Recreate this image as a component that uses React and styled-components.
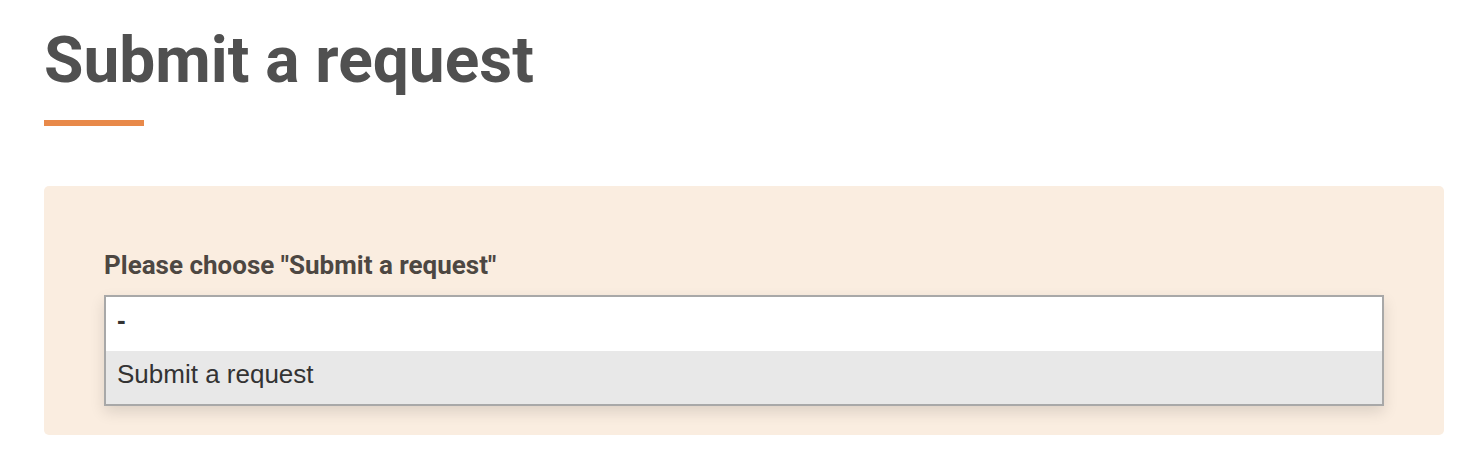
import React from 'react';
import styled, { createGlobalStyle } from 'styled-components';

const GlobalStyle = createGlobalStyle`
  html, body {
    margin: 0;
    padding: 0;
    background: #ffffff;
  }
  body {
    font-family: Roboto, "Liberation Sans", sans-serif;
  }
`;

const Page = styled.div`
  padding: 23px 40px 0 44px;
  width: 1400px;
`;

const Title = styled.h1`
  margin: 0;
  font-family: Roboto, sans-serif;
  font-weight: 700;
  font-size: 64px;
  line-height: 76px;
  color: #505050;
`;

const Accent = styled.div`
  width: 100px;
  height: 6px;
  margin-top: 21px;
  background: #e8894a;
`;

const Panel = styled.div`
  margin-top: 60px;
  height: 249px;
  box-sizing: border-box;
  padding: 64px 60px 0 60px;
  background: #faede0;
  border-radius: 5px;
`;

const Label = styled.label`
  display: block;
  font-family: Roboto, sans-serif;
  font-weight: 700;
  font-size: 26px;
  line-height: 30px;
  color: #4d4742;
`;

const ListBox = styled.div`
  margin-top: 15px;
  border: 2px solid #a8a8a8;
  background: #ffffff;
  box-shadow: 0 6px 14px rgba(0, 0, 0, 0.12);
`;

const Option = styled.div`
  height: ${p => p.h}px;
  box-sizing: border-box;
  padding: 8px 0 0 11px;
  font-family: "Liberation Sans", Arial, sans-serif;
  font-size: 26px;
  line-height: 30px;
  font-weight: ${p => (p.bold ? 700 : 400)};
  color: #333333;
  background: ${p => (p.selected ? '#e8e8e8' : '#ffffff')};
`;

const App = () => (
  <>
    <GlobalStyle />
    <Page>
      <Title>Submit a request</Title>
      <Accent />
      <Panel>
        <Label>Please choose "Submit a request"</Label>
        <ListBox>
          <Option h={54} bold>-</Option>
          <Option h={53} selected>Submit a request</Option>
        </ListBox>
      </Panel>
    </Page>
  </>
);

export default App;
